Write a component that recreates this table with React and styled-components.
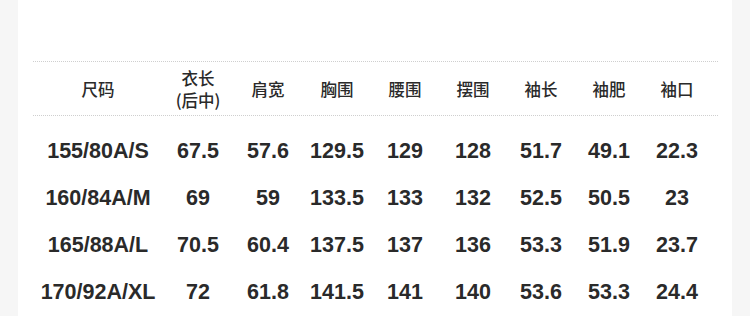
import React from "react";
import styled, { createGlobalStyle } from "styled-components";

const GlobalStyle = createGlobalStyle`
  html, body {
    margin: 0;
    padding: 0;
    background: #f6f6f6;
  }
`;

const Page = styled.div`
  display: flex;
  width: 750px;
  height: 316px;
  overflow: hidden;
  background: #f6f6f6;
`;

const Sheet = styled.div`
  width: 714px;
  margin-left: 18px;
  background: #ffffff;
  padding-top: 61px;
  box-sizing: border-box;
`;

const Table = styled.div`
  margin-left: 15px;
  width: 685px;
`;

const Row = styled.div`
  display: grid;
  grid-template-columns: 130px 70px 70px repeat(6, 68px) 1fr;
  align-items: center;
  height: ${(p) => p.$height || 47}px;
`;

const HeadRow = styled(Row)`
  border-top: 1px dotted #cfcfcf;
  border-bottom: 1px dotted #cfcfcf;
  margin-bottom: 12px;
`;

const HeadCell = styled.div`
  text-align: center;
  font-family: "Noto Sans CJK SC", "Liberation Sans", sans-serif;
  font-size: 16.5px;
  font-weight: 500;
  line-height: 22px;
  color: #2a2a2a;
`;

const Cell = styled.div`
  text-align: center;
  font-family: "Liberation Sans", Arial, sans-serif;
  font-weight: bold;
  font-size: 21.5px;
  color: #2a2a2a;
`;

const headers = [
  "尺码",
  ["衣长", "(后中)"],
  "肩宽",
  "胸围",
  "腰围",
  "摆围",
  "袖长",
  "袖肥",
  "袖口",
];

const rows = [
  ["155/80A/S", "67.5", "57.6", "129.5", "129", "128", "51.7", "49.1", "22.3"],
  ["160/84A/M", "69", "59", "133.5", "133", "132", "52.5", "50.5", "23"],
  ["165/88A/L", "70.5", "60.4", "137.5", "137", "136", "53.3", "51.9", "23.7"],
  ["170/92A/XL", "72", "61.8", "141.5", "141", "140", "53.6", "53.3", "24.4"],
];

export default function App() {
  return (
    <>
      <GlobalStyle />
      <Page>
        <Sheet>
          <Table>
            <HeadRow $height={53}>
              {headers.map((h, i) => (
                <HeadCell key={i}>
                  {Array.isArray(h) ? (
                    <>
                      {h[0]}
                      <br />
                      {h[1]}
                    </>
                  ) : (
                    h
                  )}
                </HeadCell>
              ))}
            </HeadRow>
            {rows.map((r) => (
              <Row key={r[0]}>
                {r.map((v, i) => (
                  <Cell key={i}>{v}</Cell>
                ))}
              </Row>
            ))}
          </Table>
        </Sheet>
      </Page>
    </>
  );
}
